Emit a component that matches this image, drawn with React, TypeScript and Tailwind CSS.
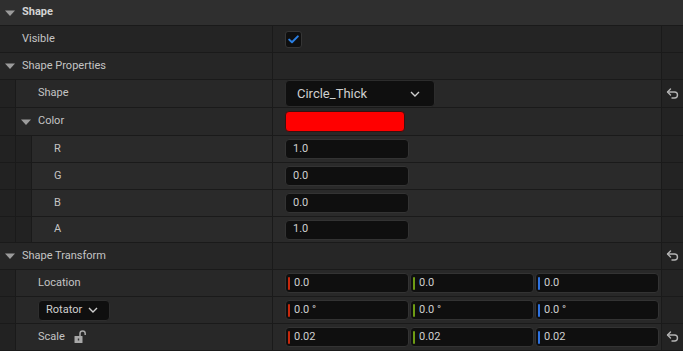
import React from 'react';

const font = { fontFamily: 'Roboto, "Noto Sans", sans-serif' };

function Triangle() {
  return (
    <svg width="10" height="6" viewBox="0 0 10 6" className="shrink-0">
      <path d="M0 0.5 H10 L5 6 Z" fill="#9c9c9c" />
    </svg>
  );
}

function ResetIcon() {
  return (
    <svg width="13" height="12" viewBox="0 0 13 12" fill="none">
      <path d="M4.5 1 L1.5 4 L4.5 7" stroke="#b4b4b4" strokeWidth="1.4" strokeLinejoin="round" strokeLinecap="round" />
      <path d="M1.8 4 H8.5 a3 3 0 0 1 0 6 H6" stroke="#b4b4b4" strokeWidth="1.4" strokeLinecap="round" />
    </svg>
  );
}

function LockIcon() {
  return (
    <svg width="13" height="14" viewBox="0 0 13 14" fill="none">
      <path d="M6 6 V3.5 a2.6 2.6 0 0 1 5.2 0 V5" stroke="#a8a8a8" strokeWidth="1.5" />
      <rect x="0.5" y="6" width="8" height="7" rx="0.5" fill="#a8a8a8" />
      <rect x="3.8" y="8.5" width="1.4" height="2" fill="#333" />
    </svg>
  );
}

function Rails({ depth }: { depth: number }) {
  return (
    <>
      {Array.from({ length: depth }).map((_, i) => (
        <div key={i} className="w-[16px] shrink-0 h-full bg-[#222222] border-r border-[#1a1a1a]" />
      ))}
    </>
  );
}

function Row({
  depth = 0,
  h = 'h-[26px]',
  bg = 'bg-[#262626]',
  name,
  value,
  reset = false,
}: {
  depth?: number;
  h?: string;
  bg?: string;
  name: React.ReactNode;
  value?: React.ReactNode;
  reset?: boolean;
}) {
  return (
    <div className={`flex ${h} ${bg} border-b border-[#1a1a1a] box-content`}>
      <div className="flex w-[273px] shrink-0 border-r border-[#1a1a1a]">
        <Rails depth={depth} />
        <div className="flex items-center flex-1 text-[11px] text-[#c4c4c4]">{name}</div>
      </div>
      <div className="flex items-center flex-1 pl-[12px]">{value}</div>
      <div className="w-[22px] shrink-0 flex items-center justify-center border-l border-[#1a1a1a] bg-[#232323]">
        {reset && <ResetIcon />}
      </div>
    </div>
  );
}

function Field({ value, w = 'w-[124px]' }: { value: string; w?: string }) {
  return (
    <div className={`${w} h-[20px] bg-[#0f0f0f] border border-[#333333] rounded-[4px] flex items-center pl-[7px] text-[11px] text-[#cfcfcf]`}>
      {value}
    </div>
  );
}

function AxisField({ value, color }: { value: string; color: string }) {
  return (
    <div className="w-[124px] h-[20px] bg-[#0f0f0f] border border-[#333333] rounded-[4px] flex items-center pl-[2px] gap-[4px] text-[11px] text-[#cfcfcf]">
      <div className="w-[2px] h-[13px] rounded-[1px]" style={{ backgroundColor: color }} />
      <span>{value}</span>
    </div>
  );
}

function Vector({ values }: { values: string[] }) {
  const colors = ['#c8280c', '#6e9c14', '#2d72e0'];
  return (
    <div className="flex gap-[1px]">
      {values.map((v, i) => (
        <AxisField key={i} value={v} color={colors[i]} />
      ))}
    </div>
  );
}

export default function App() {
  return (
    <div className="w-[683px] h-[351px] overflow-hidden bg-[#242424]" style={font}>
      {/* Category header */}
      <div className="flex items-center h-[25px] bg-[#2f2f2f] border-b border-[#1a1a1a] box-content pl-[5px] gap-[7px] text-[11px] font-bold text-[#d4d4d4]">
        <Triangle />
        <span>Shape</span>
      </div>

      <Row
        bg="bg-[#242424]"
        name={<span className="pl-[22px]">Visible</span>}
        value={
          <div className="w-[17px] h-[17px] bg-[#0f0f0f] border border-[#353535] rounded-[3px] flex items-center justify-center">
            <svg width="11" height="9" viewBox="0 0 11 9" fill="none">
              <path d="M1.2 4.6 L4 7.3 L9.8 1.4" stroke="#2b7fe3" strokeWidth="2" strokeLinecap="round" strokeLinejoin="round" />
            </svg>
          </div>
        }
      />

      <Row
        bg="bg-[#262626]"
        name={
          <div className="flex items-center pl-[5px] gap-[7px]">
            <Triangle />
            <span>Shape Properties</span>
          </div>
        }
      />

      <Row
        depth={1}
        h="h-[27px]"
        bg="bg-[#282828]"
        reset
        name={<span className="pl-[22px]">Shape</span>}
        value={
          <div className="w-[150px] h-[27px] bg-[#0f0f0f] border border-[#2c2c2c] rounded-[4px] flex items-center justify-between pl-[11px] pr-[14px] text-[13px] text-[#cfcfcf]">
            <span>Circle_Thick</span>
            <svg width="10" height="6" viewBox="0 0 10 6" fill="none">
              <path d="M1 1 L5 5 L9 1" stroke="#cfcfcf" strokeWidth="1.4" />
            </svg>
          </div>
        }
      />

      <Row
        depth={1}
        h="h-[27px]"
        bg="bg-[#282828]"
        name={
          <div className="flex items-center pl-[5px] gap-[7px]">
            <Triangle />
            <span>Color</span>
          </div>
        }
        value={<div className="w-[120px] h-[21px] bg-[#ff0000] rounded-[4px] border border-[#3a1010]" />}
      />

      {['R', 'G', 'B', 'A'].map((c, i) => (
        <Row
          key={c}
          depth={2}
          h={i === 3 ? 'h-[25px]' : 'h-[26px]'}
          bg="bg-[#2a2a2a]"
          name={<span className="pl-[22px]">{c}</span>}
          value={<Field value={i === 0 || i === 3 ? '1.0' : '0.0'} />}
        />
      ))}

      <Row
        bg="bg-[#262626]"
        reset
        name={
          <div className="flex items-center pl-[5px] gap-[7px]">
            <Triangle />
            <span>Shape Transform</span>
          </div>
        }
      />

      <Row
        depth={1}
        bg="bg-[#282828]"
        name={<span className="pl-[22px]">Location</span>}
        value={<Vector values={['0.0', '0.0', '0.0']} />}
      />

      <Row
        depth={1}
        bg="bg-[#282828]"
        name={
          <div className="pl-[22px]">
            <div className="w-[72px] h-[21px] bg-[#0f0f0f] border border-[#2e2e2e] rounded-[4px] flex items-center pl-[7px] gap-[6px] text-[11px] text-[#cfcfcf]">
              <span>Rotator</span>
              <svg width="10" height="6" viewBox="0 0 10 6" fill="none">
                <path d="M1 1 L5 5 L9 1" stroke="#cfcfcf" strokeWidth="1.4" />
              </svg>
            </div>
          </div>
        }
        value={<Vector values={['0.0 °', '0.0 °', '0.0 °']} />}
      />

      <Row
        depth={1}
        bg="bg-[#282828]"
        reset
        name={
          <div className="flex items-center pl-[22px] gap-[9px]">
            <span>Scale</span>
            <LockIcon />
          </div>
        }
        value={<Vector values={['0.02', '0.02', '0.02']} />}
      />
    </div>
  );
}
